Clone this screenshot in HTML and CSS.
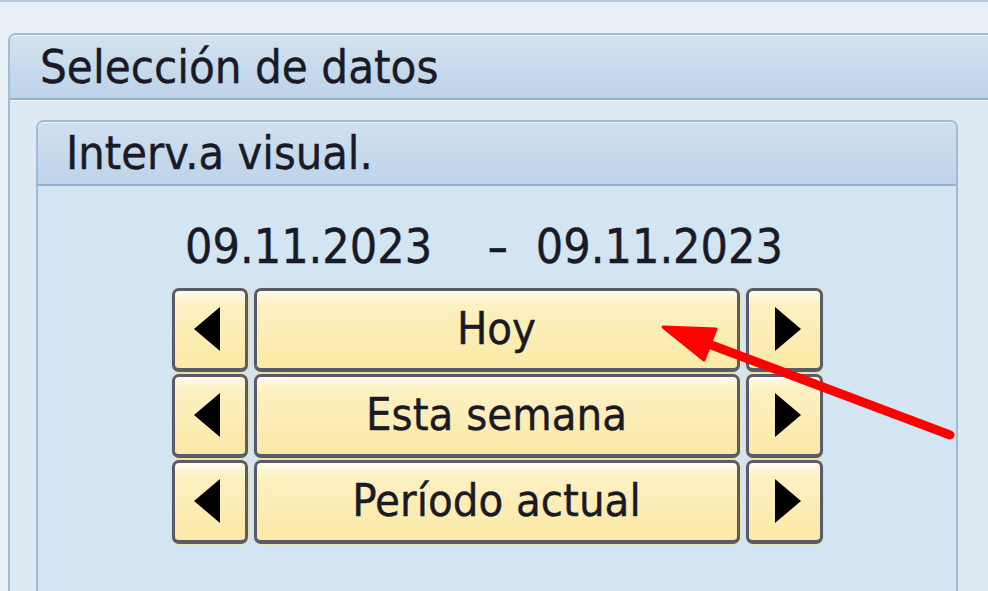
FILE: index.html
```html
<!DOCTYPE html>
<html lang="es">
<head>
<meta charset="utf-8">
<title>Selección de datos</title>
<link rel="stylesheet" href="styles.css">
</head>
<body>
<div class="outer">
  <div class="outer-head">Selección de datos</div>
  <div class="outer-body">
    <div class="inner">
      <div class="inner-head">Interv.a visual.</div>
      <div class="inner-body">
        <div class="dates">
          <span>09.11.2023</span><span class="dash">-</span><span>09.11.2023</span>
        </div>
        <div class="btn-grid">
          <button class="btn small"><svg class="tri tri-l" width="26" height="44" viewBox="0 0 26 44"><polygon points="26,0 0,22 26,44" fill="#000"/></svg></button>
          <button class="btn wide">Hoy</button>
          <button class="btn small"><svg class="tri tri-r" width="26" height="44" viewBox="0 0 26 44"><polygon points="0,0 26,22 0,44" fill="#000"/></svg></button>
          <button class="btn small"><svg class="tri tri-l" width="26" height="44" viewBox="0 0 26 44"><polygon points="26,0 0,22 26,44" fill="#000"/></svg></button>
          <button class="btn wide">Esta semana</button>
          <button class="btn small"><svg class="tri tri-r" width="26" height="44" viewBox="0 0 26 44"><polygon points="0,0 26,22 0,44" fill="#000"/></svg></button>
          <button class="btn small"><svg class="tri tri-l" width="26" height="44" viewBox="0 0 26 44"><polygon points="26,0 0,22 26,44" fill="#000"/></svg></button>
          <button class="btn wide">Período actual</button>
          <button class="btn small"><svg class="tri tri-r" width="26" height="44" viewBox="0 0 26 44"><polygon points="0,0 26,22 0,44" fill="#000"/></svg></button>
        </div>
      </div>
    </div>
  </div>
</div>
<svg class="arrow" width="988" height="591" viewBox="0 0 988 591">
  <line x1="950" y1="433" x2="706" y2="341" stroke="#f00" stroke-width="9" stroke-linecap="round"/>
  <polygon points="663,325 716,327 704,358" fill="#f00" stroke="#f00" stroke-width="3" stroke-linejoin="round"/>
</svg>
</body>
</html>
```
FILE: styles.css
```css
html, body {
  margin: 0;
  padding: 0;
}
body {
  width: 988px;
  height: 591px;
  overflow: hidden;
  position: relative;
  background: #e9eff6;
  border-top: 2px solid #b9cadb;
  box-sizing: border-box;
  padding-top: 31px;
  font-family: "DejaVu Sans Condensed", "DejaVu Sans", sans-serif;
  font-stretch: condensed;
  color: #1a1a26;
  -webkit-text-stroke: 0.4px #1a1a26;
}
.outer {
  margin-left: 8px;
  width: 1010px;
  height: 600px;
  border: 2px solid #a3bcd5;
  border-bottom: none;
  border-radius: 8px 8px 0 0;
  background: #dfe9f4;
  box-sizing: border-box;
}
.outer-head {
  height: 63px;
  line-height: 63px;
  padding-left: 30px;
  font-size: 47px;
  background: linear-gradient(#d3e2f0, #bdd3e8);
  border-radius: 6px 6px 0 0;
  border-bottom: 2px solid #97b1cc;
  box-shadow: inset 0 1px 0 #eef4fa;
}
.outer-body {
  padding: 20px 0 0 26px;
  box-shadow: inset 0 1px 0 #eef4fa;
}
.inner {
  width: 922px;
  height: 520px;
  border: 2px solid #a0bbd6;
  border-bottom: none;
  border-radius: 8px 8px 0 0;
  box-sizing: border-box;
  background: #d3e4f3;
}
.inner-head {
  height: 62px;
  line-height: 62px;
  padding-left: 28px;
  font-size: 46.5px;
  background: linear-gradient(#d0e0ef, #bed4e9);
  border-radius: 6px 6px 0 0;
  border-bottom: 2px solid #97b1cc;
  box-shadow: inset 0 1px 0 #eaf1f8;
}
.inner-body {
  padding-top: 32px;
}
.dates {
  display: flex;
  justify-content: center;
  padding-right: 26px;
  font-size: 48px;
  line-height: 56px;
  height: 56px;
}
.dash {
  padding: 0 34px 0 54px;
  transform: scaleX(1.4);
}
.btn-grid {
  display: grid;
  grid-template-columns: 76px 486px 77px;
  grid-auto-rows: 84px;
  column-gap: 6px;
  row-gap: 2px;
  justify-content: center;
  margin-top: 14px;
}
.btn {
  display: flex;
  align-items: center;
  justify-content: center;
  margin: 0;
  padding: 0 0 2px 0;
  box-sizing: border-box;
  border: 3px solid #595b69;
  border-bottom-width: 4px;
  border-radius: 7px;
  background: linear-gradient(#fffbea 0%, #fdf1c2 18%, #fbe9a6 100%);
  box-shadow: inset 0 2px 0 #fffdf4, 0 0 0 1px #ece0a8;
  font-family: inherit;
  font-stretch: condensed;
  font-size: 45px;
  color: #1a1a26;
  -webkit-text-stroke: 0.4px #1a1a26;
}
.tri-l {
  margin-right: 6px;
}
.tri-r {
  margin-left: 7px;
}
.arrow {
  position: absolute;
  left: 0;
  top: 0;
  pointer-events: none;
}
```
